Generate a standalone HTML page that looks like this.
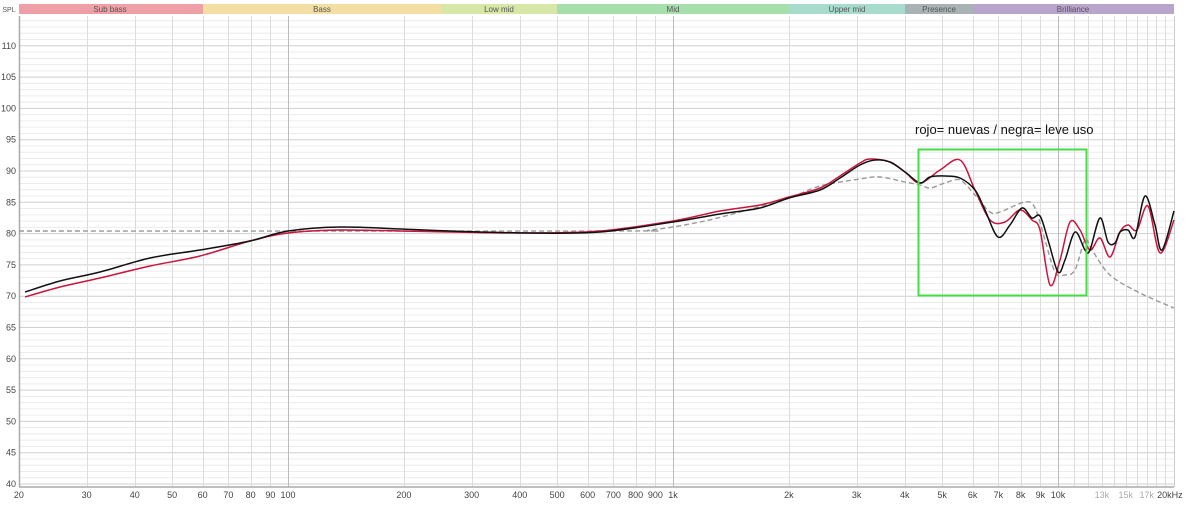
<!DOCTYPE html><html><head><meta charset="utf-8"><style>
body{margin:0;background:#fff;width:1192px;height:512px;overflow:hidden;font-family:"Liberation Sans",sans-serif}
svg{display:block}
</style></head><body>
<svg id="s" width="1192" height="512" xmlns="http://www.w3.org/2000/svg" font-family="Liberation Sans, sans-serif">
<rect x="19" y="16" width="1155" height="471" fill="#fff"/>
<g id="grid"></g>
<g font-size="8" fill="#555" text-anchor="middle">
<rect x="19" y="4" width="184" height="10" fill="#eea0a6"/><text x="110" y="12">Sub bass</text>
<rect x="203" y="4" width="238" height="10" fill="#f3dfa4"/><text x="322" y="12">Bass</text>
<rect x="441" y="4" width="116" height="10" fill="#d6e7a7"/><text x="499" y="12">Low mid</text>
<rect x="557" y="4" width="232" height="10" fill="#a6dfab"/><text x="673" y="12">Mid</text>
<rect x="789" y="4" width="116" height="10" fill="#a7dccd"/><text x="847" y="12">Upper mid</text>
<rect x="905" y="4" width="68" height="10" fill="#a9b3b5"/><text x="939" y="12">Presence</text>
<rect x="973" y="4" width="201" height="10" fill="#b9a4cc"/><text x="1073" y="12">Brilliance</text>
<text x="9" y="12" font-size="7">SPL</text>
</g>
<g id="lab" font-size="9" fill="#444"></g>
<path id="pg" fill="none" stroke="#999" stroke-width="1.4" stroke-dasharray="5,3"/>
<path id="pr" fill="none" stroke="#c8163e" stroke-width="1.5"/>
<path id="pb" fill="none" stroke="#111" stroke-width="1.5"/>
<rect x="918.5" y="149.5" width="168" height="146" fill="none" stroke="#44dd44" stroke-width="2"/>
<text x="915" y="134" font-size="13" fill="#111">rojo= nuevas / negra= leve uso</text>
</svg>
<script>
var g=document.getElementById('grid'),L=document.getElementById('lab'),ns='http://www.w3.org/2000/svg';
function X(f){return 288+385*Math.log10(f/100);}
function Y(d){return 171+(90-d)*6.26;}
function ln(x1,y1,x2,y2,c,w){var l=document.createElementNS(ns,'line');l.setAttribute('x1',x1);l.setAttribute('y1',y1);l.setAttribute('x2',x2);l.setAttribute('y2',y2);l.setAttribute('stroke',c);l.setAttribute('stroke-width',w||1);g.appendChild(l);}
function tx(x,y,t,a,c){var e=document.createElementNS(ns,'text');e.setAttribute('x',x);e.setAttribute('y',y);e.setAttribute('text-anchor',a);if(c)e.setAttribute('fill',c);e.textContent=t;L.appendChild(e);}
for(var d=40;d<=114;d++){var y=Y(d);ln(19,y,1174,y,d%5==0?'#cfcfcf':'#ececec',1);if(d%5==0)tx(16,y+3,d,'end');}
var fs=[20,30,40,50,60,70,80,90,100,200,300,400,500,600,700,800,900,1000,2000,3000,4000,5000,6000,7000,8000,9000,10000,11000,12000,13000,14000,15000,16000,17000,18000,19000,20000];
fs.forEach(function(f){var x=Math.round(X(f))+.5;var maj=(f==100||f==1000||f==10000);ln(x,16,x,487,maj?'#bbb':'#dcdcdc',1);});
var lb=[[20,'20'],[30,'30'],[40,'40'],[50,'50'],[60,'60'],[70,'70'],[80,'80'],[90,'90'],[100,'100'],[200,'200'],[300,'300'],[400,'400'],[500,'500'],[600,'600'],[700,'700'],[800,'800'],[900,'900'],[1000,'1k'],[2000,'2k'],[3000,'3k'],[4000,'4k'],[5000,'5k'],[6000,'6k'],[7000,'7k'],[8000,'8k'],[9000,'9k'],[10000,'10k'],[13000,'13k',1],[15000,'15k',1],[17000,'17k',1],[20000,'20kHz']];
lb.forEach(function(o){tx(X(o[0])+(o[1]=='20kHz'?-4:0),498,o[1],'middle',o[2]?'#aaa':null);});
ln(19,487,1174,487,'#aaa',1.5);ln(19.5,16,19.5,487,'#aaa',1.5);ln(1174.5,16,1174.5,487,'#ccc',1);
function smooth(p){var d='M'+p[0][0]+','+p[0][1];for(var i=0;i<p.length-1;i++){var p0=p[i-1]||p[i],p1=p[i],p2=p[i+1],p3=p[i+2]||p2;var c1x=p1[0]+(p2[0]-p0[0])/6,c1y=p1[1]+(p2[1]-p0[1])/6,c2x=p2[0]-(p3[0]-p1[0])/6,c2y=p2[1]-(p3[1]-p1[1])/6;d+=' C'+c1x.toFixed(1)+','+c1y.toFixed(1)+' '+c2x.toFixed(1)+','+c2y.toFixed(1)+' '+p2[0]+','+p2[1];}return d;}
var black=[[25,292],[60,281],[100,272],[150,258],[200,250],[250,241],[288,231],[340,227],[400,229],[450,231],[530,233],[600,232],[673,222],[720,214],[760,208],[789,198],[820,190],[840,178],[860,165],[875,160],[890,162],[905,172],[920,183],[930,177],[945,176],[960,178],[975,190],[985,210],[998,237],[1010,225],[1022,208],[1032,218],[1040,216],[1048,240],[1058,272],[1065,260],[1075,232],[1085,250],[1090,250],[1100,218],[1108,242],[1115,243],[1120,232],[1128,230],[1135,237],[1145,196],[1155,225],[1162,250],[1174,211]];
var red=[[25,297],[60,287],[100,278],[150,266],[200,256],[250,241],[288,233],[340,230],[400,231],[450,232],[530,233],[600,231],[673,221],[720,211],[760,205],[789,197],[820,188],[840,176],[860,163],[870,159],[890,162],[905,172],[920,183],[940,170],[960,160],[975,190],[990,220],[1005,222],[1020,210],[1032,220],[1040,230],[1050,285],[1060,260],[1070,222],[1080,230],[1090,250],[1100,238],[1110,257],[1120,232],[1128,225],[1137,230],[1148,206],[1160,253],[1174,220]];
var grey=[[19,231],[600,231],[650,230],[700,222],[740,212],[789,198],[820,186],[860,179],[880,177],[905,182],[920,185],[930,188],[945,183],[960,180],[975,195],[990,212],[1000,212],[1025,202],[1035,208],[1045,240],[1055,272],[1065,275],[1075,270],[1085,240],[1092,250],[1110,275],[1140,293],[1174,308]];
document.getElementById('pb').setAttribute('d',smooth(black));
document.getElementById('pr').setAttribute('d',smooth(red));
document.getElementById('pg').setAttribute('d',smooth(grey));
</script>
</body></html>
